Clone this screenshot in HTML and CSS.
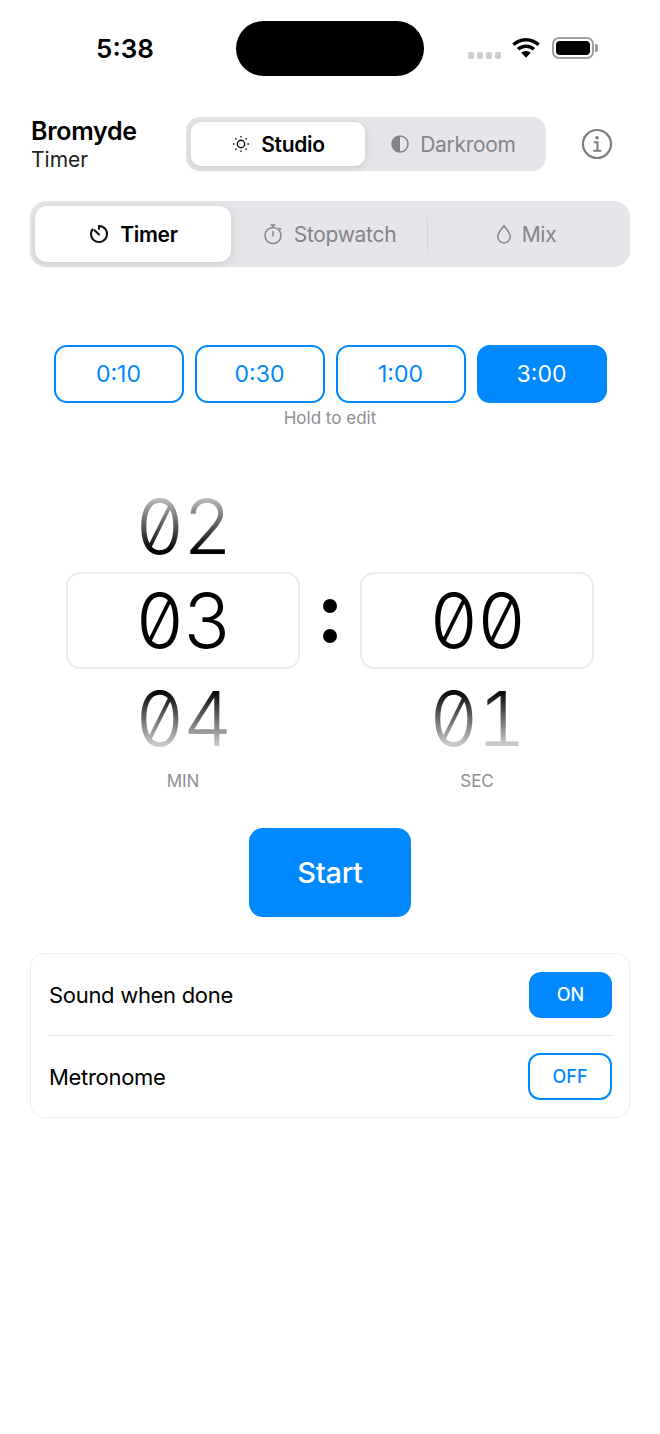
FILE: index.html
```html
<!DOCTYPE html>
<html lang="en">
<head>
    <meta charset="UTF-8">
    <meta name="viewport" content="width=device-width, initial-scale=1.0">
    <title>Bromyde Timer</title>
    <link rel="stylesheet" href="styles.css">
</head>
<body>

<!-- Status bar -->
<div class="status-bar">
    <div class="status-time">5:38</div>
    <div class="island"></div>
    <div class="status-icons">
        <div class="signal"><span></span><span></span><span></span><span></span></div>
        <svg class="wifi" width="32" height="25" viewBox="0 0 26 20">
            <path d="M13 3C8.600 3 4.700 4.700 1.800 7.500L3.700 9.600C6.100 7.300 9.400 5.900 13 5.900s6.900 1.400 9.300 3.700l1.900-2.100C21.300 4.700 17.400 3 13 3z" fill="#000"/>
            <path d="M13 8.300c-2.900 0-5.500 1.100-7.400 2.900l2 2.100c1.400-1.300 3.300-2.100 5.400-2.100s4 .8 5.400 2.100l2-2.100c-1.900-1.800-4.500-2.900-7.400-2.900z" fill="#000"/>
            <path d="M13 13.600c-1.500 0-2.800.6-3.800 1.500L13 19.200l3.800-4.100c-1-.9-2.300-1.500-3.800-1.500z" fill="#000"/>
        </svg>
        <div class="battery"><div class="battery-fill"></div></div>
        <div class="battery-cap"></div>
    </div>
</div>

<!-- Title and theme -->
<div class="top-row">
    <div class="title">
        <div class="title-main">Bromyde</div>
        <div class="title-sub">Timer</div>
    </div>
    <div class="segment theme-segment">
        <div class="seg-item active">
            <svg width="20" height="20" viewBox="0 0 20 20" fill="none" stroke="#111" stroke-width="1.400" stroke-linecap="round">
                <circle cx="10" cy="10" r="3.700"/>
                <path d="M10 2.500v.6M10 16.900v.6M2.500 10h.6M16.900 10h.6M4.700 4.700l.4.4M14.900 14.900l.4.4M4.700 15.300l.4-.4M14.900 5.100l.4-.4"/>
            </svg>
            <span>Studio</span>
        </div>
        <div class="seg-item">
            <svg width="20" height="20" viewBox="0 0 20 20">
                <circle cx="10" cy="10" r="8" fill="none" stroke="#84848a" stroke-width="1.500"/>
                <path d="M10 2a8 8 0 0 0 0 16z" fill="#84848a"/>
            </svg>
            <span>Darkroom</span>
        </div>
    </div>
    <svg class="info" width="32" height="32" viewBox="0 0 32 32" fill="none" stroke="#7d7d82" stroke-width="2.200">
        <circle cx="16" cy="16" r="14"/>
        <circle cx="16" cy="9.800" r="1.800" fill="#7d7d82" stroke="none"/>
        <path d="M12.800 14.200h3.700v8.300M12.300 22.700h8" stroke-width="2"/>
    </svg>
</div>

<!-- Mode tabs -->
<div class="segment tabs">
    <div class="seg-item active">
        <svg width="22" height="22" viewBox="0 0 22 22" fill="none" stroke="#111" stroke-width="2" stroke-linecap="round">
            <path d="M11 3a8 8 0 1 1-6.500 3.400"/>
            <path d="M11 3v3M6.600 7.200l4.400 4.300"/>
        </svg>
        <span>Timer</span>
    </div>
    <div class="seg-item">
        <svg width="22" height="22" viewBox="0 0 22 22" fill="none" stroke="#84848a" stroke-width="1.500" stroke-linecap="round">
            <circle cx="11" cy="12.500" r="8"/>
            <path d="M9 2h4M11 2v2.500M11 8.500v4.500M17.300 5l1.200 1.200"/>
        </svg>
        <span>Stopwatch</span>
    </div>
    <div class="tab-divider"></div>
    <div class="seg-item">
        <svg width="16" height="22" viewBox="2 0 16 22" fill="none" stroke="#84848a" stroke-width="1.500" stroke-linejoin="round">
            <path d="M10 2.500C7.800 6 3.800 9.600 3.800 13.700a6.200 6.200 0 0 0 12.400 0C16.200 9.600 12.200 6 10 2.500z"/>
        </svg>
        <span>Mix</span>
    </div>
</div>

<!-- Presets -->
<div class="presets">
    <div class="preset">0:10</div>
    <div class="preset">0:30</div>
    <div class="preset">1:00</div>
    <div class="preset selected">3:00</div>
</div>
<div class="hint">Hold to edit</div>

<!-- Wheel picker -->
<div class="picker">
    <div class="wheel">
        <div class="digits side above">02</div>
        <div class="digits-box"><div class="digits">03</div></div>
        <div class="digits side below">04</div>
        <div class="wheel-label">MIN</div>
    </div>
    <div class="colon"><span></span><span></span></div>
    <div class="wheel">
        <div class="digits side"></div>
        <div class="digits-box"><div class="digits">00</div></div>
        <div class="digits side below">01</div>
        <div class="wheel-label">SEC</div>
    </div>
</div>

<div class="start-wrap">
    <div class="start-btn">Start</div>
</div>

<!-- Options -->
<div class="card">
    <div class="card-row">
        <div class="card-label">Sound when done</div>
        <div class="toggle on">ON</div>
    </div>
    <div class="card-row">
        <div class="card-label">Metronome</div>
        <div class="toggle">OFF</div>
    </div>
</div>

</body>
</html>
```

FILE: styles.css
```css
body {
    font-family: Inter, "Noto Sans", sans-serif;
    margin: 0;
    padding: 0;
    background: #fff;
    color: #000;
}
.status-bar {
    display: grid;
    grid-template-columns: 236px 188px 236px;
    height: 117px;
}
.status-time {
    font-size: 26px;
    font-weight: 600;
    text-align: center;
    padding: 33px 0 0 14px;
    line-height: 32px;
}
.island {
    width: 188px;
    height: 55px;
    margin-top: 21px;
    background: #000;
    border-radius: 28px;
}
.status-icons {
    display: flex;
    align-items: flex-start;
    padding: 36px 0 0 44px;
}
.signal {
    display: flex;
    gap: 3px;
    margin-top: 16px;
}
.signal span {
    width: 6px;
    height: 7px;
    border-radius: 2px;
    background: #cdcdcd;
}
.wifi {
    margin: -2px 0 0 9px;
}
.battery {
    width: 42px;
    height: 22px;
    margin: 1px 0 0 10px;
    padding: 2px;
    box-sizing: border-box;
    border: 2px solid #a0a0a0;
    border-radius: 7px;
}
.battery-fill {
    height: 100%;
    background: #000;
    border-radius: 4px;
}
.battery-cap {
    width: 3px;
    height: 8px;
    margin: 8px 0 0 1px;
    background: #9a9a9a;
    border-radius: 0 2px 2px 0;
}
.top-row {
    display: flex;
    align-items: center;
    height: 54px;
    padding: 0 30px;
}
.title {
    width: 155px;
    padding: 2px 0 0 1px;
}
.title-main {
    font-size: 25px;
    font-weight: 600;
    line-height: 29px;
    letter-spacing: -0.3px;
}
.title-sub {
    font-size: 21px;
    line-height: 28px;
    color: #222;
}
.segment {
    display: flex;
    background: #e5e5ea;
    padding: 5px;
    box-sizing: border-box;
    align-items: stretch;
}
.theme-segment {
    width: 360px;
    height: 54px;
    border-radius: 14px;
}
.theme-segment .seg-item {
    flex: none;
    width: 174px;
}
.theme-segment .seg-item + .seg-item {
    width: 176px;
}
.seg-item {
    display: flex;
    align-items: center;
    justify-content: center;
    gap: 10px;
    font-size: 21px;
    letter-spacing: -0.3px;
    color: #84848a;
    border-radius: 10px;
}
.seg-item.active {
    background: #fff;
    color: #000;
    font-weight: 600;
    box-shadow: 0 2px 8px rgba(0, 0, 0, 0.12);
}
.info {
    margin-left: 35px;
}
.tabs {
    width: 600px;
    height: 66px;
    margin: 30px 0 0 30px;
    border-radius: 16px;
}
.tabs .seg-item {
    width: 196px;
}
.tabs .seg-item.active {
    border-radius: 12px;
}
.tab-divider {
    width: 1px;
    height: 34px;
    margin: 11px 0 0 0;
    background: #d6d6dc;
}
.presets {
    display: flex;
    justify-content: center;
    gap: 11px;
    margin-top: 78px;
}
.preset {
    width: 130px;
    height: 58px;
    box-sizing: border-box;
    border: 2px solid #0088ff;
    border-radius: 13px;
    color: #0088ff;
    font-size: 23px;
    display: flex;
    align-items: center;
    justify-content: center;
}
.preset.selected {
    background: #0088ff;
    color: #fff;
}
.hint {
    text-align: center;
    font-size: 17px;
    line-height: 20px;
    margin-top: 5px;
    color: #8e8e93;
}
.picker {
    display: flex;
    justify-content: center;
    align-items: flex-start;
    margin-top: 48px;
}
.wheel {
    width: 234px;
    text-align: center;
}
.digits {
    font-size: 76px;
    font-weight: 300;
    line-height: 96px;
    height: 96px;
    letter-spacing: -1.5px;
    font-feature-settings: "zero", "tnum";
}
.side {
    height: 96px;
}
.above {
    line-height: 100px;
    background: linear-gradient(to bottom, #c0c0c0 22%, #000 78%);
    -webkit-background-clip: text;
    background-clip: text;
    color: transparent;
}
.below {
    line-height: 98px;
    background: linear-gradient(to bottom, #000 22%, #c8c8c8 78%);
    -webkit-background-clip: text;
    background-clip: text;
    color: transparent;
}
.digits-box {
    height: 97px;
    box-sizing: border-box;
    border: 2px solid #ececee;
    border-radius: 14px;
}
.digits-box .digits {
    margin-top: -2px;
}
.wheel-label {
    font-size: 17px;
    line-height: 20px;
    color: #8e8e93;
    margin-top: 6px;
}
.colon {
    width: 60px;
    height: 97px;
    margin-top: 96px;
    display: flex;
    flex-direction: column;
    align-items: center;
    justify-content: center;
    gap: 16px;
}
.colon span {
    width: 14px;
    height: 14px;
    background: #000;
    border-radius: 50%;
}
.start-wrap {
    display: flex;
    justify-content: center;
    margin-top: 37px;
}
.start-btn {
    width: 162px;
    height: 89px;
    background: #0088ff;
    color: #fff;
    border-radius: 14px;
    font-size: 29px;
    letter-spacing: -0.3px;
    font-weight: 500;
    display: flex;
    align-items: center;
    justify-content: center;
}
.card {
    width: 600px;
    height: 165px;
    box-sizing: border-box;
    margin: 36px 0 0 30px;
    padding: 0 17px;
    border: 1px solid #ececee;
    border-radius: 14px;
}
.card-row {
    height: 81px;
    display: flex;
    align-items: center;
    justify-content: space-between;
}
.card-row + .card-row {
    border-top: 1px solid #e5e5ea;
}
.card-label {
    font-size: 22px;
    letter-spacing: -0.3px;
    padding-left: 1px;
}
.toggle {
    width: 84px;
    height: 47px;
    box-sizing: border-box;
    border: 2px solid #0088ff;
    border-radius: 12px;
    color: #0088ff;
    font-size: 18px;
    font-weight: 500;
    display: flex;
    align-items: center;
    justify-content: center;
}
.toggle.on {
    width: 83px;
    height: 46px;
    background: #0088ff;
    color: #fff;
}
```
